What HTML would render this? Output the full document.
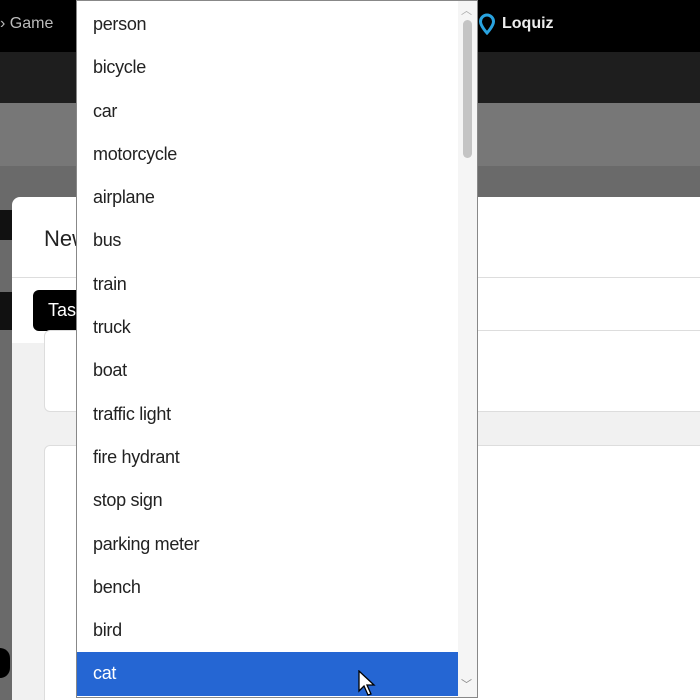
<!DOCTYPE html>
<html><head><style>
html,body{margin:0;width:700px;height:700px;overflow:hidden}
body{position:relative;background:#6a6a6a;font-family:"Liberation Sans",sans-serif}
.a{position:absolute}
.dd div{height:43.3px;line-height:43px;padding-left:16px;font-size:18px;color:#222;letter-spacing:-0.3px}
</style></head><body>
<div class="a" style="left:0;top:0;width:700px;height:52px;background:#000"></div>
<div class="a" style="left:0;top:15px;color:#bbb;font-size:16px">› Game</div>
<svg class="a" style="left:478px;top:13px" width="18" height="22" viewBox="0 0 18 22"><path d="M9 2a6.5 6.5 0 0 0-6.5 6.5C2.5 13 9 20 9 20s6.5-7 6.5-11.5A6.5 6.5 0 0 0 9 2z" fill="none" stroke="#29a3e0" stroke-width="3"/></svg>
<div class="a" style="left:502px;top:15px;color:#eee;font-size:16px;font-weight:bold">Loquiz</div>
<div class="a" style="left:0;top:52px;width:700px;height:51px;background:#1e1e1e"></div>
<div class="a" style="left:0;top:103px;width:700px;height:63px;background:#777"></div>
<div class="a" style="left:0;top:210px;width:14px;height:30px;background:#111"></div>
<div class="a" style="left:0;top:292px;width:14px;height:38px;background:#111"></div>
<div class="a" style="left:0;top:648px;width:10px;height:30px;border-radius:0 15px 15px 0;background:#000"></div>
<div class="a" style="left:12px;top:197px;width:688px;height:503px;background:#fff;border-radius:8px 0 0 0"></div>
<div class="a" style="left:44px;top:226px;font-size:22px;color:#222">New</div>
<div class="a" style="left:12px;top:277px;width:688px;height:1px;background:#ddd"></div>
<div class="a" style="left:33px;top:290px;width:60px;height:41px;background:#000;border-radius:6px;color:#fff;font-size:18px;line-height:41px;padding-left:15px;box-sizing:border-box">Task</div>
<div class="a" style="left:12px;top:343px;width:688px;height:357px;background:#f1f1f1"></div>
<div class="a" style="left:44px;top:330px;width:660px;height:80px;background:#fff;border:1px solid #ddd;border-radius:6px"></div>
<div class="a" style="left:44px;top:445px;width:660px;height:260px;background:#fff;border:1px solid #ddd;border-radius:6px"></div>
<div class="a dd" style="left:76px;top:0;width:402px;height:698px;background:#fff;border:1px solid #888;box-sizing:border-box;padding-top:2px;overflow:hidden">
<div>person</div><div>bicycle</div><div>car</div><div>motorcycle</div><div>airplane</div><div>bus</div><div>train</div><div>truck</div><div>boat</div><div>traffic light</div><div>fire hydrant</div><div>stop sign</div><div>parking meter</div><div>bench</div><div>bird</div><div style="background:#2566d3;color:#fff;width:365px">cat</div>
</div>
<div class="a" style="left:458px;top:1px;width:19px;height:696px;background:#f5f5f5"></div>
<div class="a" style="left:463px;top:20px;width:9px;height:138px;background:#c4c4c4;border-radius:5px"></div>
<div class="a" style="left:461px;top:2px;color:#aaa;font-size:11px">︿</div>
<div class="a" style="left:461px;top:676px;color:#888;font-size:11px">﹀</div>
<svg class="a" style="left:358px;top:670px" width="18" height="28" viewBox="0 0 18 28"><path d="M1 1v20l5-5 4 9 3-1-4-9h7z" fill="#fff" stroke="#000" stroke-width="1.3"/></svg>
</body></html>
